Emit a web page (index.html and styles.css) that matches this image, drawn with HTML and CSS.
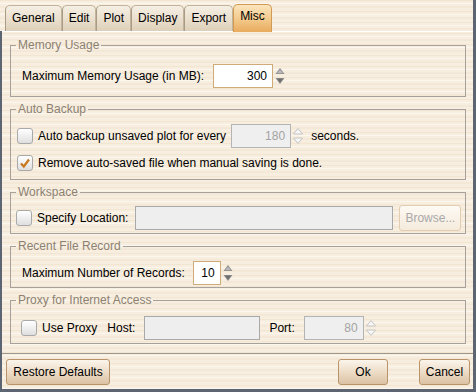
FILE: index.html
```html
<!DOCTYPE html>
<html lang="en">
<head>
    <meta charset="UTF-8">
    <title>Preferences - Misc</title>
    <link rel="stylesheet" href="styles.css">
</head>
<body>
    <div class="dialog">
        <div class="tabs">
            <div class="tab">General</div>
            <div class="tab">Edit</div>
            <div class="tab">Plot</div>
            <div class="tab">Display</div>
            <div class="tab">Export</div>
            <div class="tab tab-active">Misc</div>
        </div>

        <div class="frame">
            <div class="panel">
                <fieldset class="group group-memory">
                    <legend>Memory Usage</legend>
                    <div class="row indent">
                        <span>Maximum Memory Usage (in MB):</span>
                        <div class="spin gap-9">
                            <div class="field field-60">300</div>
                            <svg class="arrows" width="10" height="18" viewBox="0 0 10 18"><path d="M5 1 L9.5 7 L0.5 7 Z" fill="#8d8d8d"/><path d="M0.5 11 L9.5 11 L5 17 Z" fill="#8d8d8d"/><path d="M5 2.5 L8 6.3 L2 6.3 Z" fill="#b9b9b9"/><path d="M2 11.7 L8 11.7 L5 15.5 Z" fill="#6f6f6f"/></svg>
                        </div>
                    </div>
                </fieldset>

                <fieldset class="group group-backup">
                    <legend>Auto Backup</legend>
                    <div class="row row-tall">
                        <span class="check"></span>
                        <span>Auto backup unsaved plot for every</span>
                        <div class="spin gap-5">
                            <div class="field field-60 disabled">180</div>
                            <svg class="arrows" width="10" height="18" viewBox="0 0 10 18"><path d="M5 1.5 L9.5 7 L0.5 7 Z" fill="#f6f6f6" stroke="#c4c4c4"/><path d="M0.5 11 L9.5 11 L5 16.5 Z" fill="#f6f6f6" stroke="#c4c4c4"/></svg>
                        </div>
                        <span class="gap-8">seconds.</span>
                    </div>
                    <div class="row row-short">
                        <span class="check">
                            <svg width="14" height="14" viewBox="0 0 14 14"><path d="M3 7.5 L5.8 10.5 L11 3.5" fill="none" stroke="#c8771c" stroke-width="2.2"/></svg>
                        </span>
                        <span>Remove auto-saved file when manual saving is done.</span>
                    </div>
                </fieldset>

                <fieldset class="group group-workspace">
                    <legend>Workspace</legend>
                    <div class="row">
                        <span class="check"></span>
                        <span>Specify Location:</span>
                        <div class="field field-location disabled-box"></div>
                        <button class="btn btn-disabled">Browse...</button>
                    </div>
                </fieldset>

                <fieldset class="group group-recent">
                    <legend>Recent File Record</legend>
                    <div class="row indent">
                        <span>Maximum Number of Records:</span>
                        <div class="spin gap-8">
                            <div class="field field-28">10</div>
                            <svg class="arrows" width="10" height="18" viewBox="0 0 10 18"><path d="M5 1 L9.5 7 L0.5 7 Z" fill="#8d8d8d"/><path d="M0.5 11 L9.5 11 L5 17 Z" fill="#8d8d8d"/><path d="M5 2.5 L8 6.3 L2 6.3 Z" fill="#b9b9b9"/><path d="M2 11.7 L8 11.7 L5 15.5 Z" fill="#6f6f6f"/></svg>
                        </div>
                    </div>
                </fieldset>

                <fieldset class="group group-proxy">
                    <legend>Proxy for Internet Access</legend>
                    <div class="row indent-proxy">
                        <span class="check"></span>
                        <span>Use Proxy</span>
                        <span class="gap-10">Host:</span>
                        <div class="field field-host disabled-box gap-9"></div>
                        <span class="gap-9">Port:</span>
                        <div class="spin gap-9">
                            <div class="field field-60 disabled">80</div>
                            <svg class="arrows" width="10" height="18" viewBox="0 0 10 18"><path d="M5 1.5 L9.5 7 L0.5 7 Z" fill="#f6f6f6" stroke="#c4c4c4"/><path d="M0.5 11 L9.5 11 L5 16.5 Z" fill="#f6f6f6" stroke="#c4c4c4"/></svg>
                        </div>
                    </div>
                </fieldset>
            </div>

            <div class="actions">
                <button class="btn btn-restore">Restore Defaults</button>
                <button class="btn btn-ok">Ok</button>
                <button class="btn btn-cancel">Cancel</button>
            </div>
        </div>
    </div>
</body>
</html>
```

FILE: styles.css
```css
:root {
    --cream: #f7eee0;
    --frame: #5c6571;
    --text: #000000;
    --legend: #8c8171;
    --group-line: #a6a29b;
    --disabled-text: #a3a3a3;
}

* {
    margin: 0;
    padding: 0;
    box-sizing: border-box;
}

body {
    width: 476px;
    height: 392px;
    overflow: hidden;
    font-family: 'Liberation Sans', Arial, sans-serif;
    font-size: 12px;
    color: var(--text);
    white-space: nowrap;
    background-color: var(--cream);
    background-image:
        repeating-linear-gradient(180deg,
            rgba(232, 212, 182, 0.35) 0 1px,
            transparent 1px 3px,
            rgba(255, 255, 255, 0.45) 3px 4px,
            transparent 4px 6px,
            rgba(236, 220, 196, 0.3) 6px 8px,
            transparent 8px 11px);
}

.dialog {
    width: 476px;
    height: 392px;
    display: flex;
    flex-direction: column;
    border-right: 3px solid var(--frame);
}

/* tab strip */

.tabs {
    height: 31px;
    flex: none;
    display: flex;
    align-items: flex-end;
    padding-left: 5px;
    position: relative;
    z-index: 1;
}

.tab {
    height: 26px;
    padding: 0 6px;
    line-height: 25px;
    border: 1px solid #c2b49c;
    border-bottom: none;
    border-left-color: #a99b84;
    border-radius: 5px 5px 0 0;
    background: linear-gradient(#f5efe4, #e6dac6 70%, #ddd0b9);
}

.tab-active {
    height: 28px;
    line-height: 23px;
    margin-bottom: -1px;
    border-color: #d29a52;
    background: linear-gradient(#fbe5bd, #f2c889 55%, #e9ab5e);
}

/* content frame */

.frame {
    flex: 1;
    display: flex;
    flex-direction: column;
    border-left: 2px solid var(--frame);
    border-bottom: 3px solid var(--frame);
}

.panel {
    height: 323px;
    flex: none;
    display: flex;
    flex-direction: column;
    gap: 5px;
    padding: 6px 7px 0 8px;
    border-top: 1px solid #ffffff;
    border-bottom: 1px solid #9d978e;
}

.group {
    border: 1px solid var(--group-line);
    padding: 0 5px 0 5px;
    min-width: 0;
}

.group legend {
    padding: 0 2px;
    line-height: 14px;
    color: var(--legend);
}

.group-memory { padding-top: 12px; padding-bottom: 8px; }
.group-backup { padding-top: 7px; padding-bottom: 6px; }
.group-workspace { padding-top: 6px; padding-bottom: 2px; }
.group-recent { padding-top: 8px; padding-bottom: 2px; }
.group-proxy { padding-top: 9px; padding-bottom: 3px; }

.row {
    display: flex;
    align-items: center;
    gap: 5px;
    height: 24px;
    padding-left: 1px;
}

.row > * {
    flex: none;
}

.row-tall { height: 25px; }
.row-short { height: 20px; margin-top: 5px; }

.group-workspace .row { height: 26px; padding-left: 0; }
.group-workspace .row > span:nth-child(2) { margin-right: 2px; }

.indent { padding-left: 6px; gap: 0; }
.indent-proxy { padding-left: 5px; }

.gap-5 { margin-left: 0; }
.gap-8 { margin-left: 3px; }
.gap-9 { margin-left: 4px; }
.gap-10 { margin-left: 5px; }

.indent .gap-9 { margin-left: 9px; }
.indent .gap-8 { margin-left: 8px; }

/* inputs */

.check {
    width: 16px;
    height: 16px;
    display: flex;
    align-items: center;
    justify-content: center;
    border: 1px solid #a9a9a9;
    border-radius: 3px;
    background: linear-gradient(#ffffff, #ececec 60%, #dedede);
}

.spin {
    display: flex;
    align-items: center;
    gap: 2px;
}

.field {
    height: 24px;
    line-height: 22px;
    padding-right: 5px;
    text-align: right;
    background: #ffffff;
    border: 1px solid #d0ab7a;
}

.field-60 { width: 60px; }
.field-28 { width: 28px; }
.field-location { width: 258px; }
.field-host { width: 116px; }

.disabled {
    color: var(--disabled-text);
    background: #efefef;
    border-color: #b4b4b4;
}

.disabled-box {
    background: #eeeeee;
    border-color: #a9a9a9;
}

.arrows {
    flex: none;
}

/* buttons */

.btn {
    height: 26px;
    padding: 0;
    font-family: inherit;
    font-size: 12px;
    white-space: nowrap;
    color: var(--text);
    border: 1px solid #b9946a;
    border-radius: 3px;
    background: linear-gradient(#fbf5ec, #eddcc6 50%, #dcc2a4);
}

.btn-disabled {
    width: 62px;
    margin-left: 1px;
    color: #a9a9a9;
    border-color: #e3cdb1;
    background: linear-gradient(#fdf9f3, #f5ebdd);
}

.actions {
    flex: 1;
    display: flex;
    align-items: flex-start;
    padding: 5px 3px 0 4px;
}

.btn-restore { width: 104px; }
.btn-ok { width: 50px; margin-left: auto; margin-right: 31px; }
.btn-cancel { width: 51px; }
```
